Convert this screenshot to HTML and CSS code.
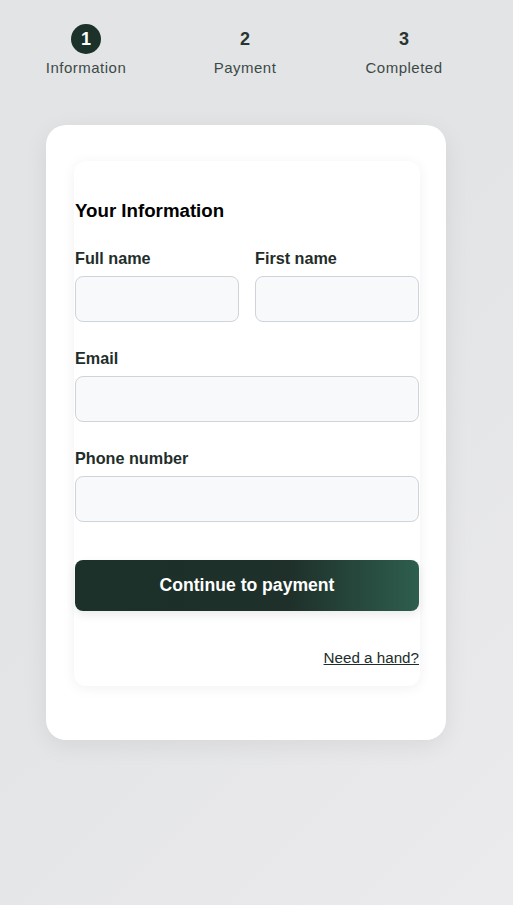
FILE: index.html
```html
<!DOCTYPE html>
<html lang="en">
<head>
<meta charset="utf-8">
<title>Checkout</title>
<link rel="stylesheet" href="styles.css">
</head>
<body>
<div class="page">
  <nav class="steps">
    <div class="step active">
      <span class="step-num">1</span>
      <span class="step-label">Information</span>
    </div>
    <div class="step">
      <span class="step-num">2</span>
      <span class="step-label">Payment</span>
    </div>
    <div class="step">
      <span class="step-num">3</span>
      <span class="step-label">Completed</span>
    </div>
  </nav>

  <main class="card">
    <form class="form-card">
      <h3 class="form-title">Your Information</h3>
      <div class="row">
        <div class="field">
          <label class="field-label">Full name</label>
          <input class="input" type="text">
        </div>
        <div class="field">
          <label class="field-label">First name</label>
          <input class="input" type="text">
        </div>
      </div>
      <div class="field">
        <label class="field-label">Email</label>
        <input class="input" type="email">
      </div>
      <div class="field">
        <label class="field-label">Phone number</label>
        <input class="input" type="tel">
      </div>
      <button class="btn" type="button">Continue to payment</button>
      <div class="help"><a href="#" class="help-link">Need a hand?</a></div>
    </form>
  </main>
</div>
</body>
</html>
```

FILE: styles.css
```css
* { box-sizing: border-box; }
html, body { margin: 0; padding: 0; }
body {
  font-family: "Liberation Sans", Arial, sans-serif;
  background: linear-gradient(135deg, #e3e4e6 0%, #e3e4e6 45%, #ebebed 100%);
  min-height: 905px;
}
.page { padding-top: 24px; }

.steps {
  display: grid;
  grid-template-columns: repeat(3, 159px);
  padding-left: 6.5px;
}
.step {
  display: flex;
  flex-direction: column;
  align-items: center;
}
.step-num {
  width: 30px;
  height: 30px;
  border-radius: 50%;
  display: flex;
  align-items: center;
  justify-content: center;
  font-weight: 700;
  font-size: 18px;
  color: #2a3431;
}
.step.active .step-num {
  background: #1b3129;
  color: #ffffff;
}
.step-label {
  margin-top: 5px;
  font-size: 15px;
  line-height: 18px;
  letter-spacing: 0.5px;
  color: #3c4a47;
}

.card {
  margin: 48px 0 0 46px;
  width: 400px;
  height: 615px;
  background: #ffffff;
  border-radius: 20px;
  padding: 36px 26px 0 28px;
  box-shadow: 0 6px 24px rgba(0, 0, 0, 0.07);
}
.form-card {
  width: 346px;
  background: #ffffff;
  border-radius: 12px;
  padding: 39px 1px 19px 1px;
  box-shadow: 0 2px 14px rgba(0, 0, 0, 0.06);
}
.form-title {
  margin: 0;
  font-size: 18.7px;
  line-height: 22px;
  font-weight: 700;
  color: #000000;
}
.row {
  display: grid;
  grid-template-columns: 1fr 1fr;
  gap: 16px;
}
.field { margin-top: 27px; }
.field-label {
  display: block;
  font-size: 16.2px;
  line-height: 19px;
  font-weight: 700;
  color: #1f2e2a;
  margin-bottom: 8px;
}
.input {
  display: block;
  width: 100%;
  height: 46px;
  border: 1px solid #ced4da;
  border-radius: 8px;
  background: #f8f9fa;
  font: inherit;
}
.btn {
  display: block;
  width: 100%;
  height: 51px;
  margin-top: 38px;
  border: 0;
  border-radius: 8px;
  background: linear-gradient(90deg, #1b3129 0%, #1e3029 62%, #2e5e4d 100%);
  color: #ffffff;
  font-family: inherit;
  font-size: 17.6px;
  font-weight: 700;
  box-shadow: 0 4px 10px rgba(0, 0, 0, 0.08);
}
.help {
  margin-top: 38px;
  text-align: right;
  line-height: 18px;
}
.help-link {
  font-size: 15.2px;
  color: #1c2e2a;
  text-decoration: underline;
}
```
